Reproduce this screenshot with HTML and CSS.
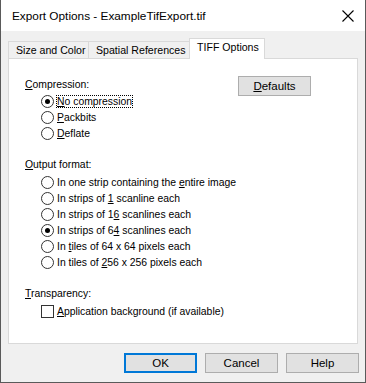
FILE: index.html
```html
<!DOCTYPE html>
<html>
<head>
<meta charset="utf-8">
<link rel="stylesheet" href="styles.css">
</head>
<body>
<div class="window">
  <div class="titlebar">
    <span class="title">Export Options - ExampleTifExport.tif</span>
    <svg class="close" width="12" height="12" viewBox="0 0 12 12"><path d="M0.5 0.5 L11.5 11.5 M11.5 0.5 L0.5 11.5" stroke="#000" stroke-width="1.1" fill="none"/></svg>
  </div>
  <div class="content">
    <div class="tabs">
      <div class="tab t1">Size and Color</div>
      <div class="tab t2">Spatial References</div>
      <div class="tab t3 active">TIFF Options</div>
    </div>
    <div class="panel">
      <div class="toprow">
        <div class="group">
          <div class="label"><u>C</u>ompression:</div>
          <div class="opt"><span class="radio on"></span><span class="focus"><u>N</u>o compression</span></div>
          <div class="opt"><span class="radio"></span><span><u>P</u>ackbits</span></div>
          <div class="opt"><span class="radio"></span><span><u>D</u>eflate</span></div>
        </div>
        <div class="btn defaults"><u>D</u>efaults</div>
      </div>
      <div class="group sec">
        <div class="label"><u>O</u>utput format:</div>
        <div class="opt first"><span class="radio"></span><span>In one strip containing the <u>e</u>ntire image</span></div>
        <div class="opt"><span class="radio"></span><span>In strips of <u>1</u> scanline each</span></div>
        <div class="opt"><span class="radio"></span><span>In strips of 1<u>6</u> scanlines each</span></div>
        <div class="opt"><span class="radio on"></span><span>In strips of 6<u>4</u> scanlines each</span></div>
        <div class="opt"><span class="radio"></span><span>In <u>t</u>iles of 64 x 64 pixels each</span></div>
        <div class="opt"><span class="radio"></span><span>In tiles of <u>2</u>56 x 256 pixels each</span></div>
      </div>
      <div class="group sec">
        <div class="label"><u>T</u>ransparency:</div>
        <div class="opt first"><span class="check"></span><span><u>A</u>pplication background (if available)</span></div>
      </div>
    </div>
    <div class="buttons">
      <div class="btn ok">OK</div>
      <div class="btn">Cancel</div>
      <div class="btn">Help</div>
    </div>
  </div>
</div>
</body>
</html>
```
FILE: styles.css
```css
* { box-sizing: border-box; }
html, body { margin: 0; padding: 0; background: #f0f0f0; }
body { font-family: "Liberation Sans", Arial, sans-serif; font-size: 11px; color: #000; }
.window {
  width: 366px; height: 383px;
  background: #f0f0f0;
  border-left: 1px solid #5a5a5a;
  border-right: 1px solid #5a5a5a;
  border-bottom: 1px solid #5a5a5a;
  display: flex; flex-direction: column;
}
.titlebar {
  height: 31px; background: #fff;
  display: flex; align-items: center; justify-content: space-between;
  padding: 0 11px 0 11px;
}
.title { font-size: 11.8px; }
.content { padding: 7px 0 0 7px; display: flex; flex-direction: column; }
.tabs { display: flex; align-items: flex-end; height: 20px; }
.tab {
  height: 17px; padding: 0 0 0 7px; line-height: 16px; font-size: 10.6px;
  border: 1px solid #d9d9d9; border-bottom: none; border-right: none;
  background: #f0f0f0; white-space: nowrap;
}
.t1 { width: 80px; }
.t2 { width: 101px; }
.t3 { width: 76px; }
.tab.active {
  height: 21px; background: #fff; border-right: 1px solid #d9d9d9;
  line-height: 16px; margin-bottom: -1px; position: relative; z-index: 1;
}
.panel {
  width: 350px; height: 286px;
  background: #fff; border: 1px solid #d9d9d9;
  padding: 18px 0 0 16px;
  font-size: 10.4px;
}
.toprow { display: flex; justify-content: space-between; align-items: flex-start; padding-right: 46px; }
.defaults { margin-top: -1px; height: 21px; font-size: 10.4px; }
.group { display: flex; flex-direction: column; }
.sec { margin-top: 16px; }
.label { height: 16px; line-height: 16px; }
.opt { height: 16px; display: flex; align-items: center; padding-left: 16px; gap: 3px; white-space: nowrap; }
.opt.first { margin-top: 1px; }
.radio {
  width: 13px; height: 13px; border-radius: 50%;
  border: 1px solid #333; background: #fff; position: relative; flex: none;
}
.radio.on::after {
  content: ""; position: absolute; left: 3px; top: 3px; width: 5px; height: 5px;
  border-radius: 50%; background: #000;
}
.check { width: 13px; height: 13px; border: 1px solid #333; background: #fff; flex: none; }
.focus { outline: 1px dotted #000; outline-offset: 0; }
.btn {
  width: 73px; height: 20px; background: #e1e1e1; border: 1px solid #adadad;
  display: flex; align-items: center; justify-content: center; font-size: 11.5px;
}
.buttons { display: flex; justify-content: flex-end; gap: 8px; margin-top: 9px; padding-right: 6px; }
.btn.ok { border: 2px solid #0078d7; }
```
